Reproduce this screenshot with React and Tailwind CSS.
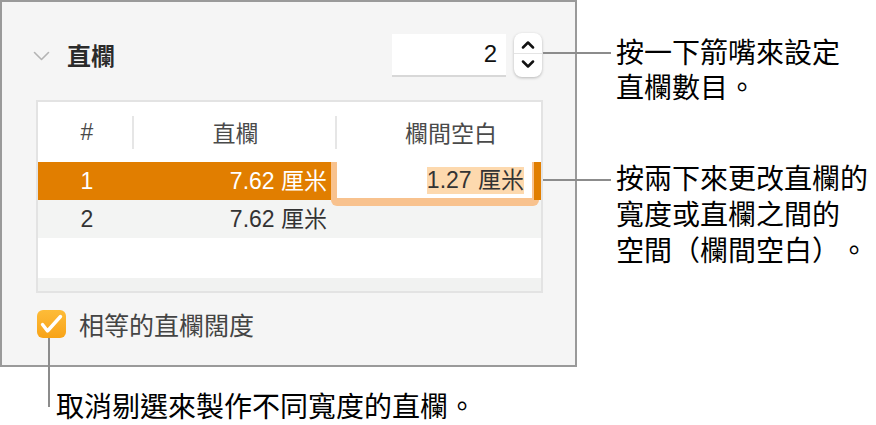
import React from 'react';

// Columns inspector (Pages) with callout annotations
const sans = "font-['Liberation_Sans','Noto_Sans_CJK_TC',sans-serif]";
const cjk = "font-['Noto_Sans_CJK_TC','Noto_Sans_CJK_SC',sans-serif] [text-spacing-trim:space-all]";

const Chevron = ({ up }) => (
  <svg width="14" height="9" viewBox="0 0 14 9" fill="none">
    <path
      d={up ? 'M2 7.5 L7 2.5 L12 7.5' : 'M2 1.5 L7 6.5 L12 1.5'}
      stroke="#111"
      strokeWidth="2.5"
      strokeLinecap="round"
      strokeLinejoin="round"
    />
  </svg>
);

export default function App() {
  return (
    <div className={`relative w-[876px] h-[425px] bg-white overflow-hidden ${sans}`}>
      <div className="flex">
        {/* Left: the inspector panel + bottom callout */}
        <div className="w-[577px] shrink-0">
          <div className="border-2 border-[#9a9a9a] bg-[#f5f5f5] pl-[31px] pr-[33px] pt-[31px] pb-[27px]">
            {/* Section header */}
            <div className="flex items-center h-[44px]">
              <svg width="17" height="10" viewBox="0 0 17 10" fill="none" className="mt-[2px]">
                <path d="M1.5 1.5 L8.5 8.5 L15.5 1.5" stroke="#b4b4b4" strokeWidth="1.6" strokeLinecap="round" strokeLinejoin="round" />
              </svg>
              <span className={`ml-[17px] text-[24px] font-bold text-[#2b2b2b] ${cjk}`}>直欄</span>
              <div className="ml-auto flex items-center gap-[8px]">
                <div className="w-[114px] h-[43px] bg-white border-b-2 border-[#d8d8d8] flex items-center justify-end pr-[9px] text-[24px] text-[#111]">
                  2
                </div>
                <div className="w-[28px] h-[44px] bg-white rounded-[8px] shadow-[0_1px_3px_rgba(0,0,0,0.25)] flex flex-col">
                  <div className="h-[21px] flex items-center justify-center border-b border-[#e4e4e4] pt-[2px]">
                    <Chevron up />
                  </div>
                  <div className="flex-1 flex items-center justify-center pb-[2px]">
                    <Chevron />
                  </div>
                </div>
              </div>
            </div>

            {/* Columns table */}
            <div className="mt-[23px] ml-[3px] w-[507px] border-2 border-[#e3e3e3] bg-white">
              <div className={`flex h-[60px] items-center text-[23px] text-[#4a4a4a] ${cjk}`}>
                <div className="w-[94px] text-center pl-[4px] font-['Liberation_Sans']">#</div>
                <div className="w-[2px] h-[33px] bg-[#e6e6e6]" />
                <div className="w-[201px] text-center pl-[2px]">直欄</div>
                <div className="w-[2px] h-[33px] bg-[#e6e6e6]" />
                <div className="flex-1 text-right pr-[44px]">欄間空白</div>
              </div>

              {/* Selected row with cell being edited */}
              <div className="relative z-10 flex h-[38px] bg-[#e17e00] text-[23px]">
                <div className="w-[94px] flex items-center justify-center pl-[4px] text-white">1</div>
                <div className="w-[199px] flex items-center justify-end pr-[4px] text-white">7.62 厘米</div>
                <div className="w-[208px] h-[44px] bg-[#f8c28e] rounded-b-[6px] flex items-start pl-[6px]">
                  <div className="w-[195px] h-[36px] bg-white flex items-center justify-end pr-[8px] text-[#333]">
                    <span className="bg-[#fdd9ae] leading-[27px]">1.27 厘米</span>
                  </div>
                  <div className="ml-[2px] w-[5px] h-[38px] bg-[#e17e00]" />
                </div>
              </div>

              <div className="flex h-[38px] bg-[#f3f4f3] text-[23px] text-[#333]">
                <div className="w-[94px] flex items-center justify-center pl-[4px]">2</div>
                <div className="w-[199px] flex items-center justify-end pr-[4px]">7.62 厘米</div>
              </div>
              <div className="h-[40px] bg-white" />
              <div className="h-[13px] bg-[#f1f2f1]" />
            </div>

            {/* Equal width checkbox */}
            <div className="mt-[17px] ml-[4px] h-[28px] flex items-center">
              <div className="w-[29px] h-[28px] rounded-[6px] bg-gradient-to-b from-[#fdbc38] to-[#f8a315] flex items-center justify-center">
                <svg width="29" height="28" viewBox="0 0 29 28" fill="none">
                  <path d="M5.5 14.5 L10.5 21 L23.5 6.5" stroke="white" strokeWidth="3.4" strokeLinecap="round" strokeLinejoin="round" />
                </svg>
              </div>
              <span className={`ml-[13px] text-[25px] leading-[28px] text-[#444] ${cjk}`}>相等的直欄闊度</span>
            </div>
          </div>

          <p className={`mt-[21px] pl-[56px] text-[28px] leading-[35px] text-black ${cjk}`}>
            取消剔選來製作不同寬度的直欄。
          </p>
        </div>

        {/* Right: callouts */}
        <div className={`ml-[39px] pt-[34px] text-[28px] text-black ${cjk}`}>
          <p className="leading-[35px]">
            按一下箭嘴來設定
            <br />
            直欄數目。
          </p>
          <p className="mt-[55px] leading-[36px]">
            按兩下來更改直欄的
            <br />
            寬度或直欄之間的
            <br />
            空間（欄間空白）。
          </p>
        </div>
      </div>

      {/* Leader lines */}
      <div className="absolute left-[543px] top-[52px] w-[68px] h-[2px] bg-[#8c8c8c]" />
      <div className="absolute left-[543px] top-[179px] w-[68px] h-[2px] bg-[#8c8c8c]" />
      <div className="absolute left-[48px] top-[338px] w-[2px] h-[69px] bg-[#8c8c8c]" />
    </div>
  );
}
